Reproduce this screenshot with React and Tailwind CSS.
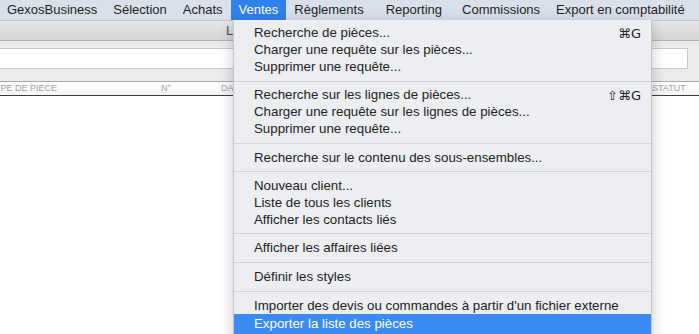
const menuBar = [
    { label: "GexosBusiness", cls: "pl-[7px] pr-[8px]" },
    { label: "Sélection", cls: "px-[8px]" },
    { label: "Achats", cls: "px-[8px]" },
    { label: "Ventes", cls: "px-[8px]" },
    { label: "Règlements", cls: "pl-[8px] pr-[14px]" },
    { label: "Reporting", cls: "pl-[8px] pr-[12px]" },
    { label: "Commissions", cls: "px-[8px]" },
    { label: "Export en comptabilité", cls: "px-[8px]" },
];

const venteItems = [
    { label: "Recherche de pièces...", shortcut: "⌘G" },
    { label: "Charger une requête sur les pièces..." },
    { label: "Supprimer une requête..." },
    { sep: true },
    { label: "Recherche sur les lignes de pièces...", shortcut: "⇧⌘G" },
    { label: "Charger une requête sur les lignes de pièces..." },
    { label: "Supprimer une requête..." },
    { sep: true },
    { label: "Recherche sur le contenu des sous-ensembles..." },
    { sep: true },
    { label: "Nouveau client..." },
    { label: "Liste de tous les clients" },
    { label: "Afficher les contacts liés" },
    { sep: true },
    { label: "Afficher les affaires liées" },
    { sep: true },
    { label: "Définir les styles" },
    { sep: true },
    { label: "Importer des devis ou commandes à partir d'un fichier externe" },
    { label: "Exporter la liste des pièces", active: true },
];

export default function App() {
    return (
        <div className="relative w-[699px] h-[334px] overflow-hidden bg-white font-['Liberation_Sans','DejaVu_Sans',sans-serif]">
            {/* barre de menus */}
            <div className="flex h-[21px] items-center bg-[#d9e0ea] border-b border-[#c2c8d1] text-[13px] text-[#1f1f1f]">
                {menuBar.map((m, i) => (
                    <div
                        key={i}
                        className={m.label === "Ventes"
                            ? "h-full flex items-center bg-[#2f80ee] text-white " + m.cls
                            : "h-full flex items-center " + m.cls}
                    >
                        {m.label}
                    </div>
                ))}
            </div>

            {/* fenêtre en arrière-plan */}
            <div className="h-[20px] bg-gradient-to-b from-[#e7e7e7] to-[#d5d5d5] border-b border-[#b3b3b3] pl-[226px] text-[13px] leading-[19px] text-[#4a4a4a]">
                Liste
            </div>
            <div className="h-[40px] bg-[#ececec] pt-[7px]">
                <div className="ml-[-1px] w-[689px] h-[21px] bg-white border border-[#c9c9c9]"></div>
            </div>
            <div className="flex h-[15px] items-center overflow-hidden bg-gradient-to-b from-white to-[#f6f6f6] border-t border-[#a8a8a8] border-b border-b-[#3c3c3c] text-[9px] text-[#a2a2a2] uppercase">
                <div className="w-[172px] shrink-0 ml-[-11px]">Type de piece</div>
                <div className="w-[60px] shrink-0">N°</div>
                <div className="w-[431px] shrink-0">Date</div>
                <div>Statut</div>
            </div>

            {/* menu Ventes déroulé */}
            <div className="absolute left-[233px] top-[20px] w-[419px] h-[330px] bg-[#eceef2] border-x border-[#c4c6ca] shadow-[0_4px_14px_rgba(0,0,0,0.22)] pt-[5px] text-[13.3px] text-[#222]">
                {venteItems.map((it, i) => {
                    if (it.sep) {
                        return (
                            <div key={i} className="h-[12px] flex items-center">
                                <div className="w-full h-px bg-[#d2d4d8]"></div>
                            </div>
                        );
                    }
                    return (
                        <div
                            key={i}
                            className={it.active
                                ? "h-[20px] flex items-center justify-between pl-[20px] pr-[10px] bg-[#3a8bf3] text-white"
                                : "h-[16.7px] flex items-center justify-between pl-[20px] pr-[10px]"}
                        >
                            <span>{it.label}</span>
                            {it.shortcut && <span className="font-['DejaVu_Sans',sans-serif] text-[13px]">{it.shortcut}</span>}
                        </div>
                    );
                })}
            </div>
        </div>
    );
}
